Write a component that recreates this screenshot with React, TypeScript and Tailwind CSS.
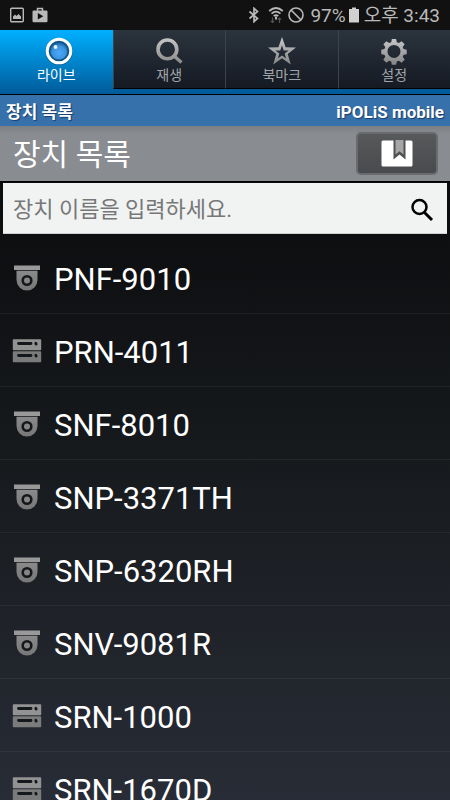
import React, { useState } from 'react';

type DeviceKind = 'camera' | 'recorder';

interface Device {
  name: string;
  kind: DeviceKind;
}

const devices: Device[] = [
  { name: 'PNF-9010', kind: 'camera' },
  { name: 'PRN-4011', kind: 'recorder' },
  { name: 'SNF-8010', kind: 'camera' },
  { name: 'SNP-3371TH', kind: 'camera' },
  { name: 'SNP-6320RH', kind: 'camera' },
  { name: 'SNV-9081R', kind: 'camera' },
  { name: 'SRN-1000', kind: 'recorder' },
  { name: 'SRN-1670D', kind: 'recorder' },
];

const LiveIcon = () => (
  <svg viewBox="0 0 28 28" className="w-7 h-7 ml-[6px]">
    <defs>
      <radialGradient id="lens" cx="0.5" cy="0.6" r="0.55">
        <stop offset="0" stopColor="#4aa9f6" />
        <stop offset="0.7" stopColor="#3d93e3" />
        <stop offset="1" stopColor="#2268a8" />
      </radialGradient>
    </defs>
    <circle cx="14" cy="14.6" r="12" fill="none" stroke="#0a4a7c" strokeOpacity="0.6" strokeWidth="3.4" />
    <circle cx="14" cy="14" r="11" fill="#0c5688" />
    <circle cx="14" cy="14" r="8.6" fill="url(#lens)" />
    <circle cx="14" cy="14" r="11.8" fill="none" stroke="#fff" strokeWidth="3" />
    <circle cx="10.5" cy="10" r="1.9" fill="#e6f5ff" />
  </svg>
);

const PlaybackIcon = () => (
  <svg viewBox="0 0 28 28" className="w-7 h-7" fill="none" stroke="url(#metal)">
    <circle cx="12.4" cy="12.4" r="9.4" strokeWidth="3.6" />
    <path d="M18.500 18.500l8 7" strokeWidth="3.4" />
  </svg>
);

const StarIcon = () => (
  <svg viewBox="0 0 28 28" className="w-7 h-7" fill="url(#metal)" fillRule="evenodd">
    <path d="M14 0l3.600 10.200 10.400.3-8.300 6.500 3.100 10.500L14 21.300l-8.800 6.200L8.300 17 0 10.500l10.400-.3zM14 8.300l-1.700 5.100-5 .1 4 3-1.400 4.900 4.100-2.900 4.100 2.900-1.400-4.900 4-3-5-.1z" />
  </svg>
);

const GearIcon = () => (
  <svg viewBox="0 0 28 28" className="w-[26px] h-7">
    <path
      fill="url(#metal)"
      fillRule="evenodd"
      d="M11.700 1h4.600l.7 3.600 2.200.9 3-2.100 3.300 3.300-2.100 3 .9 2.200 3.400.7v4.800l-3.400.7-.9 2.200 2.100 3-3.300 3.300-3-2.100-2.200.9-.7 3.300h-4.600l-.7-3.300-2.200-.9-3 2.100-3.300-3.300 2.100-3-.9-2.200L.3 17.400v-4.800l3.400-.7.9-2.200-2.100-3 3.300-3.300 3 2.100 2.200-.9zM14 7.500a7 7 0 1 0 0 14 7 7 0 0 0 0-14z"
    />
  </svg>
);

const CameraIcon = () => (
  <svg viewBox="0 0 28 26" className="w-7 h-[26px]" aria-hidden="true">
    <path d="M1 .5h26v4.500H1z" fill="#999" />
    <path d="M3.500 5.800h21v9.200a10.500 10.500 0 0 1-21 0z" fill="url(#metalDark)" />
    <circle cx="14" cy="15.5" r="4.3" fill="#858585" stroke="#15181b" strokeWidth="2.6" />
  </svg>
);

const RecorderIcon = () => (
  <svg viewBox="0 0 30 24" className="w-[30px] h-6" aria-hidden="true">
    {[0, 12].map((y) => (
      <g key={y} transform={`translate(0 ${y})`}>
        <rect x="0.8" y="0.3" width="28.4" height="11" rx="0.8" fill={y ? '#7b7b7b' : '#929292'} />
        <path d="M6.500 4.500h12.500M23.800 4.300l.4.800" stroke="#15181b" strokeWidth="2.8" strokeLinecap="round" />
      </g>
    ))}
  </svg>
);

const tabs = [
  { id: 'live', label: '라이브', icon: LiveIcon },
  { id: 'playback', label: '재생', icon: PlaybackIcon },
  { id: 'bookmark', label: '북마크', icon: StarIcon },
  { id: 'settings', label: '설정', icon: GearIcon },
];

const StatusBar = () => (
  <div className="h-[30px] shrink-0 flex items-center justify-between px-[10px] bg-[#111] text-[#b9b9b9]">
    <div className="flex items-center gap-2">
      <svg viewBox="0 0 14 16" className="w-[14px] h-4" fill="none" stroke="currentColor">
        <rect x="0.7" y="1.2" width="12.6" height="13.6" rx="1" strokeWidth="1.4" />
        <path d="M3 12V9.500l2-2 1.500 1.500L8.500 7 11 9.500V12z" fill="currentColor" stroke="none" />
      </svg>
      <svg viewBox="0 0 16 16" className="w-4 h-4">
        <path d="M5.500 4V1.500h5V4" fill="none" stroke="currentColor" strokeWidth="1.5" />
        <rect x="0.5" y="3.5" width="15" height="11.8" rx="1.2" fill="currentColor" />
        <path d="M5.800 6v6.400L11.300 9.200z" fill="#111" />
      </svg>
    </div>
    <div className="flex items-center">
      <svg viewBox="0 0 12 16" className="w-3 h-4 mr-2" fill="none" stroke="currentColor" strokeWidth="1.7">
        <path d="M1.500 4.500l8 7L6 14.700V1.300l3.500 3.200-8 7" />
      </svg>
      <svg viewBox="0 0 16 18" className="w-4 h-[18px] mr-1" fill="none" stroke="currentColor" strokeWidth="1.7">
        <path d="M1.200 5q6.800-6 13.600 0M3.500 7.700q4.500-4 9 0M5.700 10.200q2.300-2 4.600 0" />
        <path d="M8 10.500v3" strokeWidth="2" />
        <path d="M4.500 11.500v5M2.800 14.800l1.700 1.700 1.700-1.700M11.500 17v-5M9.800 13.700l1.700-1.700 1.700 1.700" stroke="#555" strokeWidth="1.2" />
      </svg>
      <svg viewBox="0 0 16 16" className="w-4 h-4 mr-[6px]" fill="none" stroke="currentColor" strokeWidth="1.6">
        <circle cx="8" cy="8" r="7" />
        <path d="M3 3l10 10" />
      </svg>
      <span className="text-[19px] leading-7 pt-[2px]">97%</span>
      <svg viewBox="0 0 10 16" className="w-[10px] h-4 ml-[3px] mr-[5px]" fill="#d0d0d0">
        <path d="M3 .5h4V2h3v13.500H0V2h3z" />
      </svg>
      <span className="text-[19px] leading-7 pt-[2px]">오후 3:43</span>
    </div>
  </div>
);

const App: React.FC = () => {
  const [activeTab, setActiveTab] = useState('live');
  const [query, setQuery] = useState('');

  const visibleDevices = devices.filter((d) => d.name.toLowerCase().includes(query.toLowerCase()));

  return (
    <div className="h-screen flex flex-col overflow-hidden bg-black text-white font-[Roboto,'Noto_Sans_CJK_KR',sans-serif]">
      {/* Shared gradients */}
      <svg width="0" height="0" className="absolute" aria-hidden="true">
        <defs>
          <linearGradient id="metal" gradientUnits="userSpaceOnUse" x1="0" y1="0" x2="0" y2="28">
            <stop offset="0" stopColor="#c8c8c8" />
            <stop offset="1" stopColor="#868686" />
          </linearGradient>
          <linearGradient id="metalDark" x1="0" y1="0" x2="0" y2="1">
            <stop offset="0" stopColor="#8a8a8a" />
            <stop offset="1" stopColor="#777" />
          </linearGradient>
        </defs>
      </svg>

      <StatusBar />

      <nav className="h-[65px] shrink-0 grid grid-cols-4 border-b border-black bg-[#005c9b]">
        {tabs.map((tab) => {
          const isActive = activeTab === tab.id;
          return (
            <button
              key={tab.id}
              onClick={() => setActiveTab(tab.id)}
              className={`flex flex-col items-center pt-[7px] text-sm leading-5
                ${isActive
                  ? 'h-16 bg-linear-to-b from-[#00b0ff] to-[#005b9a] text-white'
                  : 'h-[59px] bg-linear-to-b from-[#2b343e] to-[#151a23] text-[#a3a5a8] border-b border-b-black border-l border-l-[#3b444d]'
                }`}
            >
              <tab.icon />
              <span>{tab.label}</span>
            </button>
          );
        })}
      </nav>

      <div className="h-[31px] shrink-0 flex items-center justify-between px-[6px] pt-[2px] bg-[#3671ab] text-[17px] leading-6 font-bold [text-shadow:1px_1px_1px_#183b6a]">
        <span>장치 목록</span>
        <span>iPOLiS mobile</span>
      </div>

      <header className="h-[56px] shrink-0 flex items-center justify-between pl-[13px] pr-3 border-b border-black bg-linear-to-b from-[#7c8085] via-[#898c91] via-15% to-[#898c91]">
        <h1 className="text-[30px] leading-10 pt-[2px]">장치 목록</h1>
        <button
          aria-label="북마크"
          className="w-[82px] h-[43px] flex items-center justify-center rounded-[5px] border-2 border-[#696b6f] bg-linear-to-b from-[#58595b] to-[#494a4d]"
        >
          <svg viewBox="0 0 32 27" className="w-8 h-[27px]">
            <rect x="0.5" y="0.5" width="31" height="26" rx="1.5" fill="#fff" />
            <path d="M12.500 0h12v19.500l-6-5-6 5z" fill="#505153" />
            <path d="M14.500 0h8v14.500l-4-3.300-4 3.300z" fill="#a6a6a6" />
          </svg>
        </button>
      </header>

      <main className="flex-1 min-h-0 flex flex-col bg-linear-to-b from-[#0b0c0e] via-[#171a1d] via-45% to-[#282c36]">
        <div className="shrink-0 mx-[3px] mt-px h-[51px] flex items-center bg-[#f1f2f2] border-b border-[#cfd0d0]">
          <input
            type="text"
            aria-label="장치 이름"
            value={query}
            onChange={(e) => setQuery(e.target.value)}
            placeholder="장치 이름을 입력하세요."
            className="flex-1 min-w-0 h-full pl-[10px] pt-[2px] text-[22px] text-black placeholder:text-[#777] outline-none"
          />
          <button aria-label="검색" className="w-[50px] h-full flex items-center justify-center pt-1">
            <svg viewBox="0 0 24 24" className="w-6 h-6" fill="none" stroke="#000">
              <circle cx="9.5" cy="9" r="7" strokeWidth="2.5" />
              <path d="M14.500 14.500l7.500 7.500" strokeWidth="3" />
            </svg>
          </button>
        </div>

        <ul className="flex-1 min-h-0 mt-[7px] overflow-y-auto [scrollbar-width:none]">
          {visibleDevices.map((device) => (
            <li key={device.name} className="border-b border-white/5">
              <button className="w-full h-[72px] flex items-center gap-3 pl-3 pt-px text-left">
                <span className="w-[30px] flex justify-center">
                  {device.kind === 'camera' ? <CameraIcon /> : <RecorderIcon />}
                </span>
                <span className="text-[31px] leading-10 pt-1">{device.name}</span>
              </button>
            </li>
          ))}
        </ul>
      </main>
    </div>
  );
};

export default App;
